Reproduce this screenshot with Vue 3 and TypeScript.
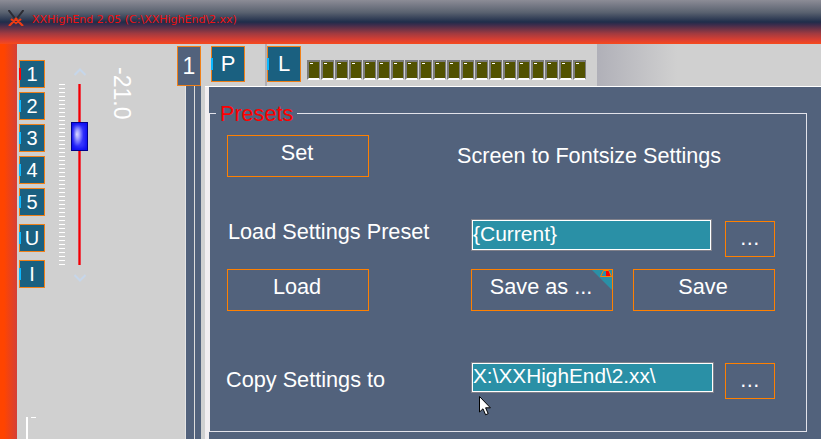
<script setup lang="ts">
const sideButtons = [
  { label: '1', active: true },
  { label: '2', active: false },
  { label: '3', active: false },
  { label: '4', active: false },
  { label: '5', active: false },
  { label: 'U', active: false, gap: true },
  { label: 'I', active: false, gap: true },
]

const ticks = Array.from({ length: 46 }, (_, i) => i)
const leds = Array.from({ length: 20 }, (_, i) => i)
</script>

<template>
  <div class="app">
    <header class="titlebar">
      <svg class="logo" width="16" height="16" viewBox="0 0 16 16">
        <path d="M0.5 0 L9 11 M15.5 0 L7 11" stroke="#2c2c34" stroke-width="2" fill="none" />
        <path d="M9 8 L1 16 M7 8 L15 16 M3 9 L8 13 L13 9" stroke="#ee3c14" stroke-width="2.2" fill="none" />
      </svg>
      <span class="title">XXHighEnd 2.05 (C:\XXHighEnd\2.xx)</span>
    </header>

    <div class="body">
      <div class="strip"></div>

      <aside class="left">
        <div class="side-buttons">
          <button
            v-for="b in sideButtons"
            :key="b.label"
            class="tab side"
            :class="{ gap: b.gap }"
            type="button"
          >
            <i class="mark" :class="{ on: b.active }"></i>{{ b.label }}
          </button>
        </div>

        <div class="slider">
          <svg class="chev" width="14" height="8" viewBox="0 0 14 8">
            <path d="M1.5 7 L7 1.5 L12.5 7" stroke="#c6d6ea" stroke-width="2" fill="none" />
          </svg>
          <div class="track">
            <div class="ticks">
              <span v-for="t in ticks" :key="t"></span>
            </div>
            <div class="rail"></div>
            <div class="thumb"></div>
          </div>
          <svg class="chev" width="14" height="8" viewBox="0 0 14 8">
            <path d="M1.5 1 L7 6.5 L12.5 1" stroke="#c6d6ea" stroke-width="2" fill="none" />
          </svg>
        </div>

        <div class="volume">-21.0</div>
        <div class="corner"></div>
      </aside>

      <main class="right">
        <div class="toolbar">
          <button class="tab one" type="button">1</button>
          <button class="tab wide p" type="button"><i class="mark"></i>P</button>
          <div class="darker"></div>
          <button class="tab wide l" type="button"><i class="mark"></i>L</button>
          <div class="leds">
            <div v-for="n in leds" :key="n" class="led"><i></i></div>
          </div>
          <div class="fade"></div>
        </div>

        <div class="content">
          <div class="columns">
            <div class="col a"></div>
            <div class="col b"></div>
          </div>
          <div class="sep"></div>

          <section class="panel">
            <div class="group">
              <span class="legend">Presets</span>

              <div class="row first">
                <button class="btn big" type="button">Set</button>
                <span class="screen-label">Screen to Fontsize Settings</span>
              </div>

              <div class="row second">
                <span class="label load-label">Load Settings Preset</span>
                <div class="field">{Current}</div>
                <button class="btn dots" type="button">...</button>
              </div>

              <div class="row third">
                <button class="btn big" type="button">Load</button>
                <button class="btn big save-as" type="button">
                  Save as ...
                  <svg class="flag" width="20" height="20" viewBox="0 0 20 20">
                    <path d="M0 0 H20 V20 Z" fill="#2a90a6" />
                    <path d="M8.5 6.5 L11.5 0.5 H16.5 L19.5 6.5 Z" fill="none" stroke="#ff8000" stroke-width="1" />
                    <path d="M14 1 H16.5 L18.5 6 H14 Z" fill="#ff0000" />
                  </svg>
                </button>
                <button class="btn big save" type="button">Save</button>
              </div>

              <div class="row fourth">
                <span class="label copy-label">Copy Settings to</span>
                <div class="field long">X:\XXHighEnd\2.xx\</div>
                <button class="btn dots" type="button">...</button>
              </div>
            </div>
          </section>
        </div>
      </main>
    </div>

    <svg class="cursor" width="13" height="20" viewBox="0 0 13 20">
      <path d="M0.5 0.5 V16 L4 12.8 L6.6 18.8 L9.2 17.6 L6.6 11.8 H11.4 Z" fill="#fff" stroke="#000" stroke-width="1" />
    </svg>
  </div>
</template>

<style>
html,
body {
  margin: 0;
  overflow: hidden;
}
</style>

<style scoped>
.app {
  position: relative;
  width: 821px;
  height: 439px;
  overflow: hidden;
  display: flex;
  flex-direction: column;
  background: #d0d0d0;
  font-family: 'Liberation Sans', Arial, sans-serif;
  color: #fff;
}

.titlebar {
  height: 44px;
  flex: none;
  display: flex;
  align-items: center;
  padding: 0 0 5px 8px;
  box-sizing: border-box;
  background: linear-gradient(#8c8c96 0%, #5a6270 28%, #1f2d4a 50%, #3a2c4c 56%, #a03a40 76%, #e04030 92%, #f64a1c 100%);
}

.logo {
  margin-right: 8px;
  margin-top: -4px;
}

.title {
  font-family: 'DejaVu Sans', sans-serif;
  font-size: 11px;
  color: #ee1111;
}

.body {
  flex: 1;
  display: flex;
  min-height: 0;
}

.strip {
  width: 17px;
  flex: none;
  background: linear-gradient(90deg, #ff4400 25%, #d44038);
}

.left {
  position: relative;
  width: 160px;
  flex: none;
  display: flex;
  align-items: flex-start;
}

.tab {
  position: relative;
  padding: 0;
  box-sizing: border-box;
  border: 1px solid #f08018;
  background: #1a6080;
  color: #fff;
  font-family: inherit;
  display: block;
  overflow: visible;
}

.mark {
  position: absolute;
  left: -1px;
  top: 50%;
  width: 2px;
  height: 12px;
  margin-top: -6px;
  background: #0cb8ff;
}

.mark.on {
  background: #ff0000;
}

.side-buttons {
  margin: 16px 0 0 2px;
  width: 26px;
  flex: none;
}

.side {
  width: 26px;
  height: 28px;
  font-size: 20px;
  margin-bottom: 4px;
}

.side.gap {
  margin-top: 8px;
  margin-bottom: 8px;
}

.side.gap + .side.gap {
  margin-top: 0;
}

.slider {
  margin: 24px 0 0 26px;
  width: 17px;
  flex: none;
  display: flex;
  flex-direction: column;
  align-items: center;
}

.chev {
  display: block;
  flex: none;
}

.track {
  position: relative;
  width: 17px;
  height: 181px;
  margin: 8px 0 9px;
}

.ticks {
  position: absolute;
  left: -12px;
  top: 0;
  width: 6px;
  display: flex;
  flex-direction: column;
  gap: 3px;
}

.ticks span {
  display: block;
  height: 1px;
  flex: none;
  background: #fff;
}

.rail {
  position: absolute;
  left: 7px;
  top: 0;
  bottom: 0;
  width: 3px;
  background: linear-gradient(90deg, #e86070, #f00000, #e86070);
}

.thumb {
  position: absolute;
  left: 0;
  top: 38px;
  width: 17px;
  height: 29px;
  box-sizing: border-box;
  border: 1px solid #00008c;
  background: radial-gradient(ellipse 7px 12px at 30% 42%, #f0f0ff 0%, #8a8aff 55%, #3a3aff 100%);
  box-shadow: inset 0 0 4px 2px #0a0af0;
}

.volume {
  margin: 23px 0 0 22px;
  writing-mode: vertical-rl;
  font-size: 23px;
  line-height: 24px;
}

.corner {
  position: absolute;
  left: 9px;
  top: 373px;
  width: 2px;
  height: 30px;
  background: #fff;
}

.corner::after {
  content: '';
  position: absolute;
  left: 5px;
  top: 0;
  width: 5px;
  height: 1px;
  background: #fff;
}

.right {
  flex: 1;
  min-width: 0;
  display: flex;
  flex-direction: column;
}

.toolbar {
  height: 42px;
  flex: none;
  display: flex;
  align-items: flex-start;
  padding-top: 2px;
  box-sizing: border-box;
}

.one {
  width: 24px;
  height: 40px;
  background: #52627c;
  font-size: 23px;
  margin-right: 10px;
}

.wide {
  width: 34px;
  height: 36px;
  font-size: 22px;
}

.darker {
  width: 22px;
  height: 42px;
  margin-top: -2px;
  background: linear-gradient(90deg, #d0d0d0 20px, #b0b0b6 20px);
  flex: none;
}

.leds {
  display: flex;
  gap: 1px;
  margin: 14px 0 0 6px;
  flex: none;
}

.led {
  position: relative;
  width: 13px;
  height: 20px;
  box-sizing: border-box;
  background: #525200;
  border-style: solid;
  border-width: 2px 1px 2px 2px;
  border-color: #7c7c7c #7c7c7c #fff #7c7c7c;
}

.led i {
  position: absolute;
  left: 1px;
  top: 1px;
  width: 3px;
  height: 1px;
  background: #fff;
}

.fade {
  width: 80px;
  height: 42px;
  margin: -2px 0 0 11px;
  flex: none;
  background: linear-gradient(90deg, #b0b0b8, #d0d0d0);
}

.content {
  flex: 1;
  min-height: 0;
  display: flex;
}

.columns {
  margin-left: 8px;
  flex: none;
  display: flex;
  border-left: 1px solid #e4e4e4;
}

.col {
  background: #52627c;
}

.col.a {
  width: 8px;
  border-right: 1px solid #dcdcdc;
}

.col.b {
  width: 6px;
}

.sep {
  width: 4px;
  margin-left: 4px;
  flex: none;
  box-sizing: border-box;
  border-top: 1px solid #fff;
  background: #f2eef0;
}

.panel {
  flex: 1;
  min-width: 0;
  background: #52627c;
  border-top: 1px solid #fff;
  padding-top: 26px;
}

.group {
  position: relative;
  box-sizing: border-box;
  width: 598px;
  height: 319px;
  border: 1px solid #e2e2ea;
  border-left-color: #f2eef0;
  padding: 21px 0 0 17px;
}

.legend {
  position: absolute;
  left: 6px;
  top: -12px;
  padding: 0 4px;
  background: #52627c;
  color: #ff0000;
  font-size: 21.6px;
  line-height: 23px;
}

.row {
  display: flex;
  align-items: flex-start;
}

.btn {
  position: relative;
  padding: 0;
  box-sizing: border-box;
  border: 1px solid #ff8000;
  background: #52627c;
  color: #fff;
  font-family: inherit;
  font-size: 21.7px;
}

.big {
  width: 142px;
  height: 42px;
  padding: 0 2px 7px 0;
}

.dots {
  width: 50px;
  height: 36px;
  margin-left: 13px;
  margin-top: 2px;
  padding-bottom: 2px;
  letter-spacing: 0.5px;
}

.first {
  align-items: center;
}

.screen-label {
  margin-left: 88px;
  font-size: 21.6px;
}

.second {
  margin-top: 42px;
}

.label {
  font-size: 21.7px;
  line-height: 24px;
  flex: none;
}

.load-label {
  width: 243px;
  margin-left: 1px;
  margin-top: 1px;
}

.copy-label {
  width: 245px;
  margin-left: -1px;
  margin-top: 6px;
}

.field {
  width: 241px;
  height: 32px;
  box-sizing: border-box;
  background: #2a90a6;
  border: 1px solid #80808a;
  box-shadow: inset 0 0 0 1px #fff;
  padding-left: 1px;
  font-size: 21px;
  line-height: 28px;
  flex: none;
}

.field.long {
  width: 243px;
  height: 31px;
  font-size: 20.8px;
  line-height: 26px;
}

.field.long + .dots {
  margin-left: 11px;
  margin-top: 1px;
}

.third {
  margin-top: 12px;
}

.save-as {
  margin-left: 102px;
}

.save {
  margin-left: 20px;
}

.flag {
  position: absolute;
  right: 0;
  top: 0;
}

.fourth {
  margin-top: 51px;
}

.cursor {
  position: absolute;
  left: 479px;
  top: 396px;
}
</style>
